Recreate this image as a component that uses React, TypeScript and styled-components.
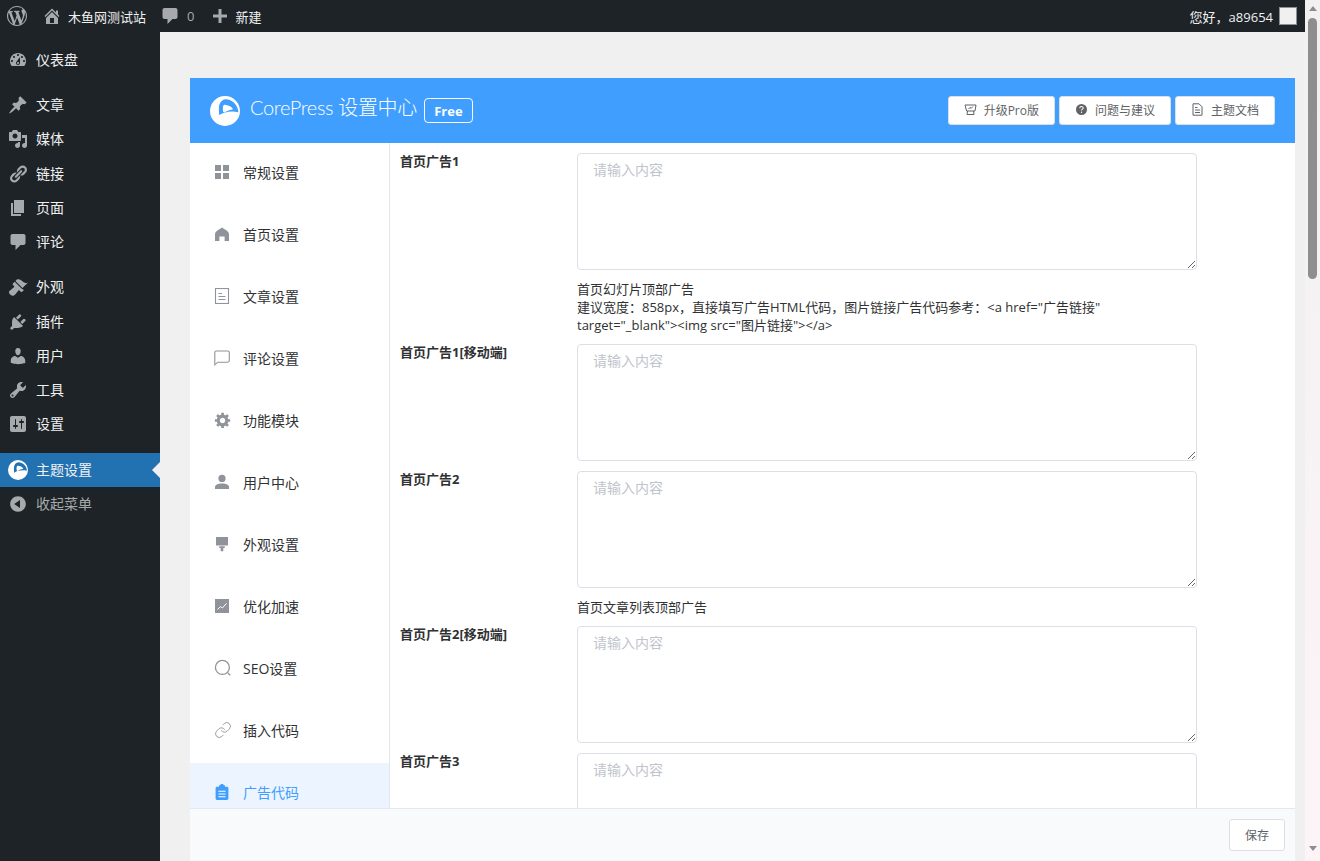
import React from "react";
import styled, { createGlobalStyle } from "styled-components";
import { Link as LinkIcon } from "lucide-react";

const dashPaths: Record<string, string> = {
  wordpress:
    "M20 10c0-5.51-4.49-10-10-10C4.48 0 0 4.49 0 10c0 5.52 4.48 10 10 10 5.51 0 10-4.48 10-10zM7.78 15.37L4.37 6.22c.55-.02 1.17-.08 1.17-.08.5-.06.44-1.13-.06-1.11 0 0-1.45.11-2.37.11-.18 0-.37 0-.58-.01C4.12 2.69 6.87 1.11 10 1.11c2.33 0 4.45.87 6.05 2.34-.68-.11-1.65.39-1.65 1.58 0 .74.45 1.36.9 2.1.35.61.55 1.36.55 2.46 0 1.49-1.4 5-1.4 5l-3.03-8.37c.54-.02.82-.17.82-.17.5-.05.44-1.25-.06-1.22 0 0-1.44.12-2.38.12-.87 0-2.33-.12-2.33-.12-.5-.03-.56 1.2-.06 1.22l.92.08 1.26 3.41zM17.41 10c.24-.64.74-1.87.43-4.25.7 1.29 1.05 2.71 1.05 4.25 0 3.29-1.73 6.24-4.4 7.78.97-2.59 1.94-5.2 2.92-7.78zM6.1 18.09C3.12 16.65 1.11 13.53 1.11 10c0-1.3.23-2.48.72-3.59C3.25 10.3 4.67 14.2 6.1 18.09zm4.03-6.63l2.58 6.98c-.86.29-1.76.45-2.71.45-.79 0-1.57-.11-2.29-.33.81-2.38 1.62-4.74 2.42-7.1z",
  home: "M16 8.5l1.53 1.53-1.06 1.06L10 4.62l-6.47 6.47-1.06-1.06L10 2.5l4 4v-2h2v4zm-6-2.46l6 5.99V18H4v-5.97zM12 17v-5H8v5h4z",
  plus: "M17 8.5v3h-5.5V17h-3v-5.5H3v-3h5.5V3h3v5.5z",
  dashboard:
    "M3.76 16h12.48c1.1-1.37 1.76-3.11 1.76-5 0-4.42-3.58-8-8-8s-8 3.58-8 8c0 1.89.66 3.63 1.76 5zM10 4c.55 0 1 .45 1 1s-.45 1-1 1-1-.45-1-1 .45-1 1-1zM6 6c.55 0 1 .45 1 1s-.45 1-1 1-1-.45-1-1 .45-1 1-1zm8 0c.55 0 1 .45 1 1s-.45 1-1 1-1-.45-1-1 .45-1 1-1zm-5.37 5.55L12 7v6c0 1.1-.9 2-2 2s-2-.9-2-2c0-.57.24-1.08.63-1.45zM4 10c.55 0 1 .45 1 1s-.45 1-1 1-1-.45-1-1 .45-1 1-1zm12 0c.55 0 1 .45 1 1s-.45 1-1 1-1-.45-1-1 .45-1 1-1zm-5 3c0-.55-.45-1-1-1s-1 .45-1 1 .45 1 1 1 1-.45 1-1z",
  post: "M10.44 3.02l1.82-1.82 6.36 6.35-1.83 1.82c-1.05-.68-2.48-.57-3.41.36l-.75.75c-.92.93-1.04 2.35-.35 3.41l-1.83 1.82-2.41-2.41-2.8 2.79c-.42.42-3.38 2.71-3.8 2.29s1.86-3.39 2.28-3.81l2.79-2.79L4.1 9.36l1.83-1.82c1.05.69 2.48.57 3.4-.36l.75-.75c.93-.92 1.05-2.35.36-3.41z",
  media:
    "M13 11V4c0-.55-.45-1-1-1h-1.67L9 1H5L3.67 3H2c-.55 0-1 .45-1 1v7c0 .55.45 1 1 1h10c.55 0 1-.45 1-1zM7 4.5c1.38 0 2.5 1.12 2.5 2.5S8.38 9.5 7 9.5 4.5 8.38 4.5 7 5.62 4.5 7 4.5zM14 6h5v10.5c0 1.38-1.12 2.5-2.5 2.5S14 17.88 14 16.5s1.12-2.5 2.5-2.5c.17 0 .34.02.5.05V9h-3V6zm-4 8.05V13h2v3.5c0 1.38-1.12 2.5-2.5 2.5S7 17.88 7 16.5 8.12 14 9.5 14c.17 0 .34.02.5.05z",
  links:
    "M17.74 2.76c1.68 1.69 1.68 4.41 0 6.1l-1.53 1.52c-1.12 1.12-2.7 1.47-4.14 1.09l2.62-2.61.76-.77.76-.76c.84-.84.84-2.2 0-3.04-.84-.85-2.2-.85-3.04 0l-.77.76-3.38 3.38c-.37-1.44-.02-3.02 1.1-4.14l1.52-1.53c1.69-1.68 4.42-1.68 6.1 0zM8.59 13.43l5.34-5.34c.42-.42.42-1.1 0-1.52-.44-.43-1.13-.39-1.53 0l-5.33 5.34c-.42.42-.42 1.1 0 1.52.44.43 1.13.39 1.52 0zm-.76 2.29l4.14-4.15c.38 1.44.03 3.02-1.09 4.14l-1.52 1.53c-1.69 1.68-4.41 1.68-6.1 0-1.68-1.68-1.68-4.42 0-6.1l1.53-1.52c1.12-1.12 2.7-1.47 4.14-1.1l-4.14 4.15c-.85.84-.85 2.2 0 3.05.84.84 2.2.84 3.04 0z",
  page: "M6 15V2h10v13H6zm-1 1h8v2H3V5h2v11z",
  comments:
    "M4.5 2h11c1.1 0 2 .9 2 2v7c0 1.1-.9 2-2 2h-3l-5 5v-5h-3c-1.1 0-2-.9-2-2V4c0-1.1.9-2 2-2z",
  appearance:
    "M14.48 11.06L7.41 3.99l1.5-1.5c.5-.56 2.3-.47 3.51.32 1.21.8 1.43 1.28 2.91 2.1 1.18.64 2.45 1.26 4.45.85zm-.71.71L6.7 4.7 4.93 6.47c-.39.39-.39 1.02 0 1.41l1.06 1.06c.39.39.39 1.03 0 1.42-.6.6-1.43 1.11-2.21 1.69-.35.26-.7.53-1.01.84C1.43 13.23.99 14.3 1 15.17c.01.88.43 1.71 1.1 2.38.67.67 1.5 1.09 2.38 1.1.87.01 1.94-.43 3.27-1.77.31-.31.58-.66.84-1.01.58-.78 1.09-1.61 1.69-2.21.39-.39 1.03-.39 1.42 0l1.06 1.06c.39.39 1.02.39 1.41 0l1.77-1.77z",
  plugins:
    "M13.11 4.36L9.87 7.6 8 5.73l3.24-3.24c.35-.34 1.05-.2 1.56.32.52.51.66 1.21.31 1.55zm-8 1.77l.91-1.12 9.01 9.01-1.19.84c-.71.71-2.63 1.16-3.82 1.16H6.14L4.9 17.26c-.59.59-1.54.59-2.12 0-.59-.58-.59-1.53 0-2.12l1.24-1.24v-3.88c0-1.13.4-3.19 1.09-3.89zm7.26 3.97l3.24-3.24c.34-.35 1.04-.21 1.55.31.52.51.66 1.21.31 1.55l-3.24 3.25z",
  users:
    "M10 9.25c-2.27 0-2.73-3.44-2.73-3.44C7 4.02 7.82 2 9.97 2c2.16 0 2.98 2.02 2.71 3.81 0 0-.41 3.44-2.68 3.44zm0 2.57L12.72 10c2.39 0 4.52 2.33 4.52 4.53v2.49s-3.65 1.13-7.24 1.13c-3.65 0-7.24-1.13-7.24-1.13v-2.49c0-2.25 1.94-4.48 4.47-4.48z",
  tools:
    "M16.68 9.77c-1.34 1.34-3.3 1.67-4.95.99l-5.41 6.52c-.99.99-2.59.99-3.58 0s-.99-2.59 0-3.57l6.52-5.42c-.68-1.65-.35-3.61.99-4.95 1.28-1.28 3.12-1.62 4.72-1.06l-2.89 2.89 2.82 2.82 2.86-2.87c.53 1.58.18 3.39-1.08 4.65zM3.81 16.21c.4.39 1.04.39 1.43 0 .4-.4.4-1.04 0-1.43-.39-.4-1.03-.4-1.43 0-.39.39-.39 1.03 0 1.43z",
  settings:
    "M18 16V4c0-1.1-.9-2-2-2H4c-1.1 0-2 .9-2 2v12c0 1.1.9 2 2 2h12c1.1 0 2-.9 2-2zM8 11h1c.55 0 1 .45 1 1s-.45 1-1 1H8v1.5c0 .28-.22.5-.5.5s-.5-.22-.5-.5V13H6c-.55 0-1-.45-1-1s.45-1 1-1h1V5.5c0-.28.22-.5.5-.5s.5.22.5.5V11zm5-2h-1c-.55 0-1-.45-1-1s.45-1 1-1h1V5.5c0-.28.22-.5.5-.5s.5.22.5.5V7h1c.55 0 1 .45 1 1s-.45 1-1 1h-1v5.5c0 .28-.22.5-.5.5s-.5-.22-.5-.5V9z",
  collapse:
    "M10 2.16c4.33 0 7.84 3.51 7.84 7.84s-3.51 7.84-7.84 7.84S2.16 14.33 2.16 10 5.71 2.16 10 2.16zm2 11.72V6.12L6.18 9.97z",
  gear: "M18 12h-2.18c-.17.7-.44 1.35-.81 1.93l1.54 1.54-2.1 2.1-1.54-1.54c-.58.36-1.23.63-1.91.79V19H8v-2.18c-.68-.16-1.33-.43-1.91-.79l-1.54 1.54-2.12-2.12 1.54-1.54c-.36-.58-.63-1.23-.79-1.91H1V9.03h2.17c.16-.7.44-1.35.8-1.94L2.43 5.55l2.1-2.1 1.54 1.54c.58-.37 1.24-.64 1.93-.81V2h3v2.18c.68.16 1.33.43 1.91.79l1.54-1.54 2.12 2.12-1.54 1.54c.36.59.64 1.24.8 1.94H18V12zm-8.5 1.5c1.66 0 3-1.34 3-3s-1.34-3-3-3-3 1.34-3 3 1.34 3 3 3z",
};

const Dash = ({ name, size = 20 }: { name: string; size?: number }) => (
  <svg width={size} height={size} viewBox="0 0 20 20" fill="currentColor">
    <path d={dashPaths[name]} />
  </svg>
);

const LogoMark = ({ size, cut }: { size: number; cut: string }) => (
  <svg width={size} height={size} viewBox="0 0 30 30">
    <circle cx="15" cy="15" r="15" fill="#fff" />
    <path
      d="M15.5 3.2C22.4 3.2 28 9 28.4 16.2C21.4 14.6 15 15.6 9.2 19C8.8 15 8.8 12 9.2 9.6C10 6 12.4 3.4 15.5 3.2Z"
      fill={cut}
    />
    <path
      d="M15 8.8C18 9 21.2 10.6 22.6 12.4C23 13 22.7 13.4 22 13.6C19.6 14 17.4 14.8 15 16.2C14 16.7 13.2 16.2 13 15.2C12.8 13.6 12.8 12.2 13 10.6C13.2 9.4 14 8.8 15 8.8Z"
      fill="#fff"
    />
  </svg>
);

// icons of the settings nav, all on a 16 box
const navIcons: Record<string, React.ReactNode> = {
  grid: (
    <svg width="16" height="16" viewBox="0 0 16 16" fill="currentColor">
      <rect x="1" y="1" width="6" height="6" />
      <rect x="9" y="1" width="6" height="6" />
      <rect x="1" y="9" width="6" height="6" />
      <rect x="9" y="9" width="6" height="6" />
    </svg>
  ),
  home: (
    <svg width="16" height="16" viewBox="0 0 16 16" fill="currentColor">
      <path d="M8 1.6L10.6 3.2C13 4.7 15 6 15 8V15H10.6V10.6H5.4V15H1V8C1 6 3 4.7 5.4 3.2Z" />
    </svg>
  ),
  doc: (
    <svg width="16" height="16" viewBox="0 0 16 16" fill="none" stroke="currentColor">
      <rect x="1.5" y="0.5" width="13" height="15" strokeWidth="1.1" />
      <path d="M4.5 5.5H8M4.5 8.5H11.5M4.5 11.5H11.5" strokeWidth="1.1" />
    </svg>
  ),
  chat: (
    <svg width="16" height="16" viewBox="0 0 16 16" fill="none" stroke="currentColor" strokeWidth="1.1">
      <path d="M2.4 1H13.6C14.6 1 15.3 1.7 15.3 2.6V10.6C15.3 11.6 14.6 12.2 13.6 12.2H3.8L0.8 14.8V2.6C0.8 1.7 1.4 1 2.4 1Z" />
    </svg>
  ),
  gear: <Dash name="gear" size={18} />,
  user: (
    <svg width="16" height="16" viewBox="0 0 16 16" fill="currentColor">
      <circle cx="8" cy="4.4" r="3.6" />
      <path d="M1 15V13C1 10.6 3.8 9.4 8 9.4S15 10.6 15 13V15Z" />
    </svg>
  ),
  brush: (
    <svg width="16" height="16" viewBox="0 0 16 16" fill="currentColor">
      <path d="M2 1H14V9.4H2ZM5.2 10.2H10.8V12H9.3V15.2H6.7V12H5.2Z" />
    </svg>
  ),
  chart: (
    <svg width="16" height="16" viewBox="0 0 16 16">
      <rect x="1" y="1" width="14" height="14" fill="currentColor" />
      <path d="M3.5 11.5L6.5 8.6L8.4 10L12.5 5.4" fill="none" stroke="#fff" strokeWidth="1" />
    </svg>
  ),
  search: (
    <svg width="18" height="18" viewBox="0 0 18 18" fill="none" stroke="currentColor" strokeWidth="1.3">
      <circle cx="8.4" cy="8.4" r="7" />
      <path d="M13.6 13.6L16.2 16.2" />
    </svg>
  ),
  link: <LinkIcon size={18} strokeWidth={1.2} />,
  clip: (
    <svg width="16" height="16" viewBox="0 0 16 16" fill="currentColor">
      <path d="M5 1.2H6.2C6.4 0.4 7 0 8 0S9.6 .4 9.8 1.2H11V2.8H13C13.8 2.8 14.4 3.4 14.4 4.2V14.6C14.4 15.4 13.8 16 13 16H3C2.2 16 1.6 15.4 1.6 14.6V4.2C1.6 3.4 2.2 2.8 3 2.8H5Z" />
      <path d="M4.4 7.2H11.6M4.4 10H11.6M4.4 12.8H11.6" stroke="#fff" strokeWidth="1.1" />
    </svg>
  ),
};

const GlobalStyle = createGlobalStyle`
  html, body {
    margin: 0;
    padding: 0;
    height: 100%;
    overflow: hidden;
  }
  body {
    font-family: "Open Sans", "Noto Sans CJK SC", sans-serif;
    font-size: 13px;
    background: #f0f0f1;
  }
  #root {
    height: 100%;
  }
  * {
    box-sizing: border-box;
  }
`;

const Shell = styled.div`
  display: flex;
  height: 861px;
  width: 1320px;
`;

const Page = styled.div`
  flex: 1;
  min-width: 0;
  display: flex;
  flex-direction: column;
`;

const AdminBar = styled.header`
  height: 32px;
  flex: none;
  background: #1d2327;
  color: #f0f0f1;
  display: flex;
  align-items: center;
  padding: 0 8px 0 7px;
  font-size: 13px;
`;

const BarIcon = styled.span<{ $left?: number; $gap?: number }>`
  display: inline-flex;
  color: #a7aaad;
  margin-left: ${(p) => p.$left ?? 0}px;
  margin-right: ${(p) => p.$gap ?? 0}px;
`;

const BarCount = styled.span`
  color: #a7aaad;
  margin-left: 7px;
`;

const Greeting = styled.span`
  margin-left: auto;
  margin-right: 6px;
`;

const Avatar = styled.span`
  width: 18px;
  height: 18px;
  background: #f0f0f1;
  border: 1px solid #8c8f94;
`;

const Workspace = styled.div`
  flex: 1;
  min-height: 0;
  display: flex;
`;

const Sidebar = styled.nav`
  width: 160px;
  flex: none;
  background: #1d2327;
  padding-top: 10.75px;
  color: #f0f0f1;
  font-size: 14px;
`;

const MenuItem = styled.div<{ $active?: boolean; $muted?: boolean }>`
  position: relative;
  height: 34.25px;
  display: flex;
  align-items: center;
  gap: 8px;
  padding-left: 8px;
  background: ${(p) => (p.$active ? "#2271b1" : "transparent")};
  color: ${(p) => (p.$muted ? "#a7aaad" : "#f0f0f1")};

  ${(p) =>
    p.$active &&
    `&::after {
      content: "";
      position: absolute;
      right: 0;
      top: 9px;
      border: 8px solid transparent;
      border-right-color: #f0f0f1;
      border-left-width: 0;
    }`}
`;

const MenuLabel = styled.span`
  line-height: 20px;
`;

const MenuIcon = styled.span`
  display: inline-flex;
  width: 20px;
  color: #a7aaad;
`;

const MenuSeparator = styled.div`
  height: 11px;
`;

const Content = styled.main`
  flex: 1;
  min-width: 0;
  display: flex;
  padding: 46px 10px 0 30px;
`;

const Panel = styled.section`
  flex: 1;
  min-width: 0;
  display: flex;
  flex-direction: column;
  background: #fff;
`;

const PanelHeader = styled.div`
  height: 65px;
  flex: none;
  background: #409eff;
  display: flex;
  align-items: center;
  padding: 0 20px;
  color: #fff;
`;

const PanelTitle = styled.h1`
  margin: 0 7px 7px 10px;
  font-family: "Lato", "Noto Sans CJK SC", sans-serif;
  font-size: 20px;
  font-weight: 300;
  line-height: 30px;
  letter-spacing: -0.35px;
`;

const FreeBadge = styled.span`
  height: 25px;
  width: 49px;
  display: flex;
  align-items: center;
  justify-content: center;
  border: 1px solid #fff;
  border-radius: 4px;
  font-size: 13px;
  font-weight: 700;
`;

const HeaderActions = styled.div`
  margin-left: auto;
  display: flex;
  gap: 4px;
`;

const HeaderButton = styled.button`
  height: 29px;
  padding: 0 15px 2px;
  display: flex;
  align-items: center;
  gap: 7px;
  background: #fff;
  border: 1px solid #dcdfe6;
  border-radius: 3px;
  color: #606266;
  font-family: inherit;
  font-size: 12px;
`;

const PanelBody = styled.div`
  flex: 1;
  min-height: 0;
  display: flex;
  overflow: hidden;
`;

const SettingsNav = styled.div`
  width: 200px;
  flex: none;
  border-right: 1px solid #e4e7ed;
`;

const NavItem = styled.div<{ $active?: boolean }>`
  height: 62px;
  flex: none;
  display: flex;
  align-items: center;
  padding-left: 24px;
  padding-bottom: 4px;
  background: ${(p) => (p.$active ? "#ecf5ff" : "transparent")};
  color: ${(p) => (p.$active ? "#409eff" : "#303133")};
  font-size: 14px;
`;

const NavIcon = styled.span<{ $active?: boolean }>`
  width: 29px;
  display: flex;
  align-items: center;
  color: ${(p) => (p.$active ? "#409eff" : "#909399")};
`;

const Form = styled.div`
  flex: 1;
  min-width: 0;
  padding: 10px 0 0 10px;
`;

const FieldRow = styled.div`
  display: grid;
  grid-template-columns: 177px 620px;
  padding-bottom: 10px;
`;

const FieldLabel = styled.label`
  font-size: 13px;
  font-weight: 700;
  line-height: 16px;
  color: #303133;
`;

const FieldArea = styled.textarea`
  display: block;
  width: 620px;
  height: 117px;
  padding: 5px 15px;
  border: 1px solid #dcdfe6;
  border-radius: 4px;
  font-family: inherit;
  font-size: 14px;
  line-height: 21px;
  color: #606266;
  outline: none;

  &::placeholder {
    color: #c0c4cc;
  }
`;

const FieldHint = styled.div`
  margin-top: 10px;
  font-size: 13px;
  line-height: 18px;
  color: #303133;
`;

const PanelFooter = styled.div`
  height: 53px;
  flex: none;
  display: flex;
  align-items: center;
  justify-content: flex-end;
  padding: 0 10px 0 0;
  background: #f9fafc;
  border-top: 1px solid #e4e7ed;
`;

const SaveButton = styled.button`
  width: 56px;
  height: 32px;
  padding-bottom: 2px;
  background: #fff;
  border: 1px solid #dcdfe6;
  border-radius: 3px;
  color: #606266;
  font-family: inherit;
  font-size: 12px;
`;

const Scrollbar = styled.div`
  width: 15px;
  flex: none;
  display: flex;
  flex-direction: column;
  align-items: center;
  padding: 6px 0;
  background: linear-gradient(#f1f1f1, #fdf4f8);
`;

const ScrollThumb = styled.div`
  width: 9px;
  height: 261px;
  margin-top: 7px;
  background: #8e8e8e;
  border-radius: 5px;
`;

const ScrollArrow = styled.div<{ $down?: boolean }>`
  border: 4px solid transparent;
  border-left-width: 4.5px;
  border-right-width: 4.5px;
  ${(p) =>
    p.$down
      ? "border-top: 5px solid #8e8e8e; border-bottom: 0; margin-top: auto; margin-bottom: 4px;"
      : "border-bottom: 5px solid #8e8e8e; border-top: 0;"}
`;

type MenuEntry = { icon: string; label: string } | null;

const menu: MenuEntry[] = [
  { icon: "dashboard", label: "仪表盘" },
  null,
  { icon: "post", label: "文章" },
  { icon: "media", label: "媒体" },
  { icon: "links", label: "链接" },
  { icon: "page", label: "页面" },
  { icon: "comments", label: "评论" },
  null,
  { icon: "appearance", label: "外观" },
  { icon: "plugins", label: "插件" },
  { icon: "users", label: "用户" },
  { icon: "tools", label: "工具" },
  { icon: "settings", label: "设置" },
  null,
];

const navItems = [
  ["grid", "常规设置"],
  ["home", "首页设置"],
  ["doc", "文章设置"],
  ["chat", "评论设置"],
  ["gear", "功能模块"],
  ["user", "用户中心"],
  ["brush", "外观设置"],
  ["chart", "优化加速"],
  ["search", "SEO设置"],
  ["link", "插入代码"],
  ["clip", "广告代码"],
];

const fields: { label: string; hint?: string[] }[] = [
  {
    label: "首页广告1",
    hint: [
      "首页幻灯片顶部广告",
      '建议宽度：858px，直接填写广告HTML代码，图片链接广告代码参考：<a href="广告链接"',
      'target="_blank"><img src="图片链接"></a>',
    ],
  },
  { label: "首页广告1[移动端]" },
  { label: "首页广告2", hint: ["首页文章列表顶部广告"] },
  { label: "首页广告2[移动端]" },
  { label: "首页广告3" },
];

const App = () => {
  return (
    <Shell>
      <GlobalStyle />
      <Page>
        <AdminBar>
          <BarIcon $gap={15}>
            <Dash name="wordpress" />
          </BarIcon>
          <BarIcon $gap={6}>
            <Dash name="home" />
          </BarIcon>
          <span>木鱼网测试站</span>
          <BarIcon $left={14}>
            <Dash name="comments" />
          </BarIcon>
          <BarCount>0</BarCount>
          <BarIcon $left={16} $gap={5}>
            <Dash name="plus" />
          </BarIcon>
          <span>新建</span>
          <Greeting>您好，a89654</Greeting>
          <Avatar />
        </AdminBar>
        <Workspace>
          <Sidebar>
            {menu.map((item, i) =>
              item ? (
                <MenuItem key={item.label}>
                  <MenuIcon>
                    <Dash name={item.icon} />
                  </MenuIcon>
                  <MenuLabel>{item.label}</MenuLabel>
                </MenuItem>
              ) : (
                <MenuSeparator key={i} />
              )
            )}
            <MenuItem $active>
              <MenuIcon>
                <LogoMark size={20} cut="#2271b1" />
              </MenuIcon>
              <MenuLabel>主题设置</MenuLabel>
            </MenuItem>
            <MenuItem $muted>
              <MenuIcon>
                <Dash name="collapse" />
              </MenuIcon>
              <MenuLabel>收起菜单</MenuLabel>
            </MenuItem>
          </Sidebar>
          <Content>
            <Panel>
              <PanelHeader>
                <LogoMark size={30} cut="#409eff" />
                <PanelTitle>CorePress 设置中心</PanelTitle>
                <FreeBadge>Free</FreeBadge>
                <HeaderActions>
                  <HeaderButton>
                    <svg width="13" height="13" viewBox="0 0 13 13" fill="none" stroke="#606266">
                      <path d="M1 2H12L11 8H2.6ZM3.6 8L3 11.5M9.6 8L10 11.5M3 11.5H10M4.5 6L6 4.4L7.2 5.4L8.8 3.6" />
                    </svg>
                    升级Pro版
                  </HeaderButton>
                  <HeaderButton>
                    <svg width="13" height="13" viewBox="0 0 13 13">
                      <circle cx="6.5" cy="6.5" r="5.5" fill="#606266" />
                      <path d="M4.8 5.2C4.8 3 8.2 3 8.2 5C8.2 6.2 6.5 6.1 6.5 7.6" fill="none" stroke="#fff" strokeWidth="1.1" />
                      <circle cx="6.5" cy="9.3" r="0.7" fill="#fff" />
                    </svg>
                    问题与建议
                  </HeaderButton>
                  <HeaderButton>
                    <svg width="13" height="13" viewBox="0 0 13 13" fill="none" stroke="#606266">
                      <path d="M2 .8H8L11 3.8V12.2H2ZM4 7H9M4 9.5H9M4 4.5H6.5" />
                    </svg>
                    主题文档
                  </HeaderButton>
                </HeaderActions>
              </PanelHeader>
              <PanelBody>
                <SettingsNav>
                  {navItems.map(([icon, label]) => (
                    <NavItem key={label} $active={icon === "clip"}>
                      <NavIcon $active={icon === "clip"}>{navIcons[icon]}</NavIcon>
                      {label}
                    </NavItem>
                  ))}
                </SettingsNav>
                <Form>
                  {fields.map((field) => (
                    <FieldRow key={field.label}>
                      <FieldLabel>{field.label}</FieldLabel>
                      <div>
                        <FieldArea placeholder="请输入内容" />
                        {field.hint && (
                          <FieldHint>
                            {field.hint.map((line) => (
                              <div key={line}>{line}</div>
                            ))}
                          </FieldHint>
                        )}
                      </div>
                    </FieldRow>
                  ))}
                </Form>
              </PanelBody>
              <PanelFooter>
                <SaveButton>保存</SaveButton>
              </PanelFooter>
            </Panel>
          </Content>
        </Workspace>
      </Page>
      <Scrollbar>
        <ScrollArrow />
        <ScrollThumb />
        <ScrollArrow $down />
      </Scrollbar>
    </Shell>
  );
};

export default App;
